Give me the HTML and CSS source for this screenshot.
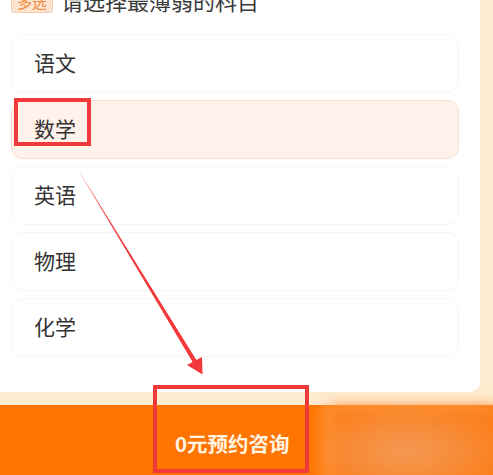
FILE: index.html
```html
<!DOCTYPE html>
<html lang="zh">
<head>
<meta charset="utf-8">
<link rel="stylesheet" href="styles.css">
</head>
<body>
<div class="page">
  <div class="card">
    <div class="heading">
      <span class="badge">多选</span>
      <span class="title">请选择最薄弱的科目</span>
    </div>
    <div class="list">
      <div class="option">语文</div>
      <div class="option selected">数学</div>
      <div class="option">英语</div>
      <div class="option">物理</div>
      <div class="option">化学</div>
    </div>
  </div>
  <div class="gap"></div>
  <div class="bar">
    <span class="cta">0元预约咨询</span>
    <div class="blurred"></div>
  </div>
</div>
<div class="mark mark-one"></div>
<div class="mark mark-two"></div>
<svg class="arrow" width="493" height="475" viewBox="0 0 493 475">
  <polygon points="77,168 196.4,359.9 202,357 202.5,374.5 187,365 192.6,362.1" fill="#f2383a"/>
</svg>
</body>
</html>
```

FILE: styles.css
```css
html, body {
  margin: 0;
  padding: 0;
}
body {
  width: 493px;
  height: 475px;
  overflow: hidden;
  background: #fdecd0;
  font-family: "Noto Sans CJK SC", "Noto Sans", sans-serif;
  position: relative;
}
.page {
  display: flex;
  flex-direction: column;
  height: 475px;
}
.card {
  background: #ffffff;
  height: 392px;
  margin-right: 13px;
  border-bottom-right-radius: 10px;
  padding: 0 21px 0 11px;
  box-sizing: border-box;
  display: flex;
  flex-direction: column;
}
.heading {
  display: flex;
  align-items: center;
  gap: 8px;
  margin-top: -15px;
  height: 32px;
}
.badge {
  font-size: 15px;
  line-height: 21px;
  padding: 0 5px;
  color: #f1873a;
  background: #fde6d1;
  border: 1px solid #f6caa4;
  border-radius: 3px;
}
.title {
  font-size: 22px;
  color: #3a3a3a;
  line-height: 32px;
  margin-top: -2px;
}
.list {
  margin-top: 17px;
  display: flex;
  flex-direction: column;
  gap: 7px;
  height: 323px;
  overflow: hidden;
}
.option {
  flex: 0 0 59px;
  box-sizing: border-box;
  border: 1px solid #f6f6f6;
  border-radius: 12px;
  padding-left: 22px;
  display: flex;
  align-items: center;
  font-size: 21px;
  color: #333333;
  padding-bottom: 4px;
}
.option.selected {
  background: #fff2ea;
  border-color: #fbdcc7;
}
.gap {
  height: 13px;
}
.bar {
  flex: 1;
  background: #ff7500;
  position: relative;
  display: flex;
  align-items: center;
  padding-left: 175px;
  padding-top: 6px;
  box-sizing: border-box;
}
.cta {
  color: #fff4e4;
  font-size: 20.5px;
  font-weight: bold;
}
.blurred {
  position: absolute;
  left: 330px;
  top: 2px;
  width: 170px;
  height: 80px;
  background: radial-gradient(ellipse at 45% 55%, #f49a55 0%, #f88a36 45%, #fb7f1c 75%);
  filter: blur(7px);
  box-shadow: -4px -4px 10px rgba(255, 225, 200, 0.6);
}
.mark {
  position: absolute;
  border: 4px solid #f0393b;
  box-sizing: border-box;
}
.mark-one {
  left: 14px;
  top: 98px;
  width: 77px;
  height: 48px;
}
.mark-two {
  left: 153px;
  top: 385px;
  width: 156px;
  height: 88px;
}
.arrow {
  position: absolute;
  left: 0;
  top: 0;
}
```
